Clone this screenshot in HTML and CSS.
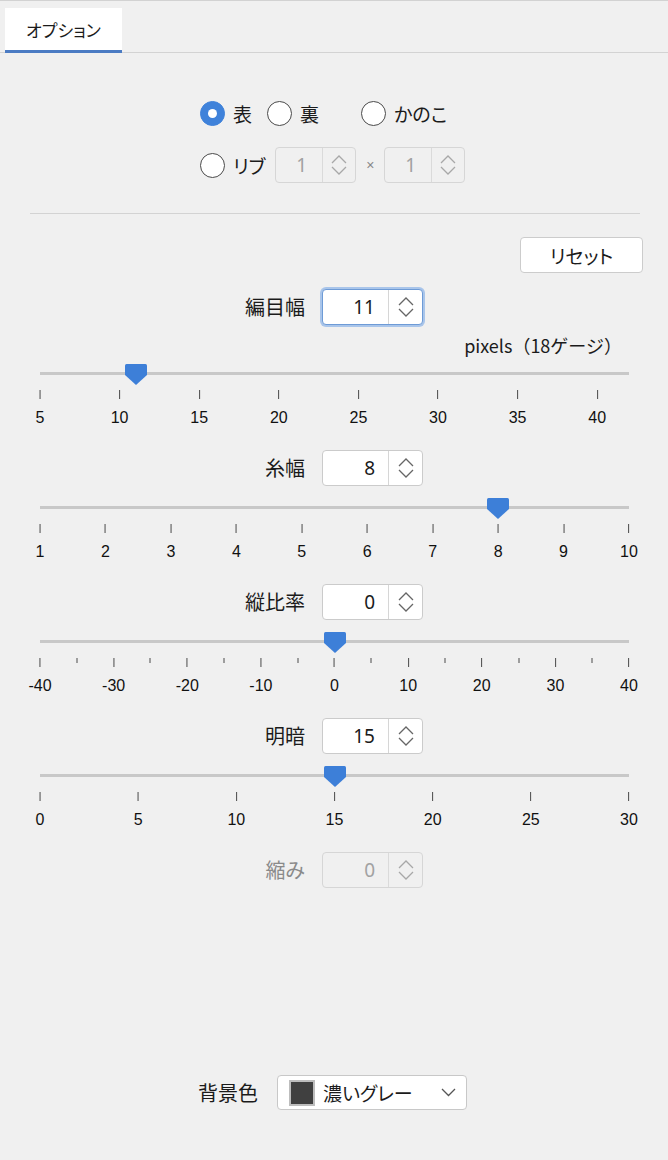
FILE: index.html
```html
<!DOCTYPE html>
<html lang="ja">
<head>
<meta charset="utf-8">
<title>オプション</title>
<link rel="stylesheet" href="styles.css">
</head>
<body>
<div class="panel">
  <div class="topline"></div>
  <div class="tabs"><div class="tab">オプション</div></div>

  <div class="stitch">
    <div class="stitch-row r1">
      <label class="radio i1"><span class="dot checked"></span><span class="rtext">表</span></label>
      <label class="radio i2"><span class="dot"></span><span class="rtext">裏</span></label>
      <label class="radio"><span class="dot"></span><span class="rtext">かのこ</span></label>
    </div>
    <div class="stitch-row r2">
      <label class="radio"><span class="dot"></span><span class="rtext">リブ</span></label>
      <div class="spin small disabled rib1">
        <span class="val">1</span>
        <span class="arrows"><svg width="18" height="24" viewBox="0 0 18 24"><path d="M2 10 L9 3 L16 10 M2 14 L9 21 L16 14" fill="none" stroke="currentColor" stroke-width="1.3"/></svg></span>
      </div>
      <span class="times">×</span>
      <div class="spin small disabled">
        <span class="val">1</span>
        <span class="arrows"><svg width="18" height="24" viewBox="0 0 18 24"><path d="M2 10 L9 3 L16 10 M2 14 L9 21 L16 14" fill="none" stroke="currentColor" stroke-width="1.3"/></svg></span>
      </div>
    </div>
  </div>

  <div class="sep"></div>

  <div class="reset-row"><button class="btn">リセット</button></div>

  <div class="field first">
    <span class="label">編目幅</span>
    <div class="spin focused">
      <span class="val">11</span>
      <span class="arrows"><svg width="18" height="24" viewBox="0 0 18 24"><path d="M2 10 L9 3 L16 10 M2 14 L9 21 L16 14" fill="none" stroke="currentColor" stroke-width="1.3"/></svg></span>
    </div>
  </div>
  <div class="unit">pixels（18ゲージ）</div>
  <div class="slider s-first">
    <div class="track"></div>
    <svg class="thumb" style="left:16.216%" width="22" height="21" viewBox="0 0 22 21"><path d="M1.5 0 H20.5 Q22 0 22 1.5 V11 L11 21 L0 11 V1.5 Q0 0 1.5 0 Z" fill="#3d7fd8"/></svg>
    <div class="tick" style="left:0%"><i></i><b>5</b></div>
    <div class="tick" style="left:13.514%"><i></i><b>10</b></div>
    <div class="tick" style="left:27.027%"><i></i><b>15</b></div>
    <div class="tick" style="left:40.541%"><i></i><b>20</b></div>
    <div class="tick" style="left:54.054%"><i></i><b>25</b></div>
    <div class="tick" style="left:67.568%"><i></i><b>30</b></div>
    <div class="tick" style="left:81.081%"><i></i><b>35</b></div>
    <div class="tick" style="left:94.595%"><i></i><b>40</b></div>
  </div>

  <div class="field">
    <span class="label">糸幅</span>
    <div class="spin">
      <span class="val">8</span>
      <span class="arrows"><svg width="18" height="24" viewBox="0 0 18 24"><path d="M2 10 L9 3 L16 10 M2 14 L9 21 L16 14" fill="none" stroke="currentColor" stroke-width="1.3"/></svg></span>
    </div>
  </div>
  <div class="slider">
    <div class="track"></div>
    <svg class="thumb" style="left:77.778%" width="22" height="21" viewBox="0 0 22 21"><path d="M1.5 0 H20.5 Q22 0 22 1.5 V11 L11 21 L0 11 V1.5 Q0 0 1.5 0 Z" fill="#3d7fd8"/></svg>
    <div class="tick" style="left:0%"><i></i><b>1</b></div>
    <div class="tick" style="left:11.111%"><i></i><b>2</b></div>
    <div class="tick" style="left:22.222%"><i></i><b>3</b></div>
    <div class="tick" style="left:33.333%"><i></i><b>4</b></div>
    <div class="tick" style="left:44.444%"><i></i><b>5</b></div>
    <div class="tick" style="left:55.556%"><i></i><b>6</b></div>
    <div class="tick" style="left:66.667%"><i></i><b>7</b></div>
    <div class="tick" style="left:77.778%"><i></i><b>8</b></div>
    <div class="tick" style="left:88.889%"><i></i><b>9</b></div>
    <div class="tick" style="left:100%"><i></i><b>10</b></div>
  </div>

  <div class="field">
    <span class="label">縦比率</span>
    <div class="spin">
      <span class="val">0</span>
      <span class="arrows"><svg width="18" height="24" viewBox="0 0 18 24"><path d="M2 10 L9 3 L16 10 M2 14 L9 21 L16 14" fill="none" stroke="currentColor" stroke-width="1.3"/></svg></span>
    </div>
  </div>
  <div class="slider">
    <div class="track"></div>
    <svg class="thumb" style="left:50%" width="22" height="21" viewBox="0 0 22 21"><path d="M1.5 0 H20.5 Q22 0 22 1.5 V11 L11 21 L0 11 V1.5 Q0 0 1.5 0 Z" fill="#3d7fd8"/></svg>
    <div class="tick" style="left:0%"><i></i><b>-40</b></div>
    <div class="tick minor" style="left:6.25%"><i></i></div>
    <div class="tick" style="left:12.5%"><i></i><b>-30</b></div>
    <div class="tick minor" style="left:18.75%"><i></i></div>
    <div class="tick" style="left:25%"><i></i><b>-20</b></div>
    <div class="tick minor" style="left:31.25%"><i></i></div>
    <div class="tick" style="left:37.5%"><i></i><b>-10</b></div>
    <div class="tick minor" style="left:43.75%"><i></i></div>
    <div class="tick" style="left:50%"><i></i><b>0</b></div>
    <div class="tick minor" style="left:56.25%"><i></i></div>
    <div class="tick" style="left:62.5%"><i></i><b>10</b></div>
    <div class="tick minor" style="left:68.75%"><i></i></div>
    <div class="tick" style="left:75%"><i></i><b>20</b></div>
    <div class="tick minor" style="left:81.25%"><i></i></div>
    <div class="tick" style="left:87.5%"><i></i><b>30</b></div>
    <div class="tick minor" style="left:93.75%"><i></i></div>
    <div class="tick" style="left:100%"><i></i><b>40</b></div>
  </div>

  <div class="field">
    <span class="label">明暗</span>
    <div class="spin">
      <span class="val">15</span>
      <span class="arrows"><svg width="18" height="24" viewBox="0 0 18 24"><path d="M2 10 L9 3 L16 10 M2 14 L9 21 L16 14" fill="none" stroke="currentColor" stroke-width="1.3"/></svg></span>
    </div>
  </div>
  <div class="slider">
    <div class="track"></div>
    <svg class="thumb" style="left:50%" width="22" height="21" viewBox="0 0 22 21"><path d="M1.5 0 H20.5 Q22 0 22 1.5 V11 L11 21 L0 11 V1.5 Q0 0 1.5 0 Z" fill="#3d7fd8"/></svg>
    <div class="tick" style="left:0%"><i></i><b>0</b></div>
    <div class="tick" style="left:16.667%"><i></i><b>5</b></div>
    <div class="tick" style="left:33.333%"><i></i><b>10</b></div>
    <div class="tick" style="left:50%"><i></i><b>15</b></div>
    <div class="tick" style="left:66.667%"><i></i><b>20</b></div>
    <div class="tick" style="left:83.333%"><i></i><b>25</b></div>
    <div class="tick" style="left:100%"><i></i><b>30</b></div>
  </div>

  <div class="field disabled-field">
    <span class="label">縮み</span>
    <div class="spin disabled">
      <span class="val">0</span>
      <span class="arrows"><svg width="18" height="24" viewBox="0 0 18 24"><path d="M2 10 L9 3 L16 10 M2 14 L9 21 L16 14" fill="none" stroke="currentColor" stroke-width="1.3"/></svg></span>
    </div>
  </div>

  <div class="bg-row">
    <span class="bg-label">背景色</span>
    <div class="select">
      <span class="swatch"></span>
      <span class="sel-text">濃いグレー</span>
      <svg class="caret" width="15" height="9" viewBox="0 0 15 9"><path d="M1 1 L7.5 7.5 L14 1" fill="none" stroke="#555" stroke-width="1.3"/></svg>
    </div>
  </div>
</div>
</body>
</html>
```

FILE: styles.css
```css
html, body {
  margin: 0;
  padding: 0;
}

body {
  background: #f0f0f0;
  color: #1b1b1b;
  font-family: "Noto Sans CJK JP", "Noto Sans", sans-serif;
  font-feature-settings: "palt";
  font-size: 19px;
}

.panel {
  width: 668px;
  min-height: 1160px;
}

.topline {
  height: 1px;
  background: #d2d2d2;
}

.tabs {
  padding: 7px 0 0 5px;
  border-bottom: 1px solid #d3d3d3;
  display: flex;
}

.tab {
  width: 117px;
  height: 42px;
  background: #ffffff;
  border-bottom: 3px solid #4b7bc3;
  margin-bottom: -1px;
  display: flex;
  align-items: center;
  justify-content: center;
  font-size: 17px;
  color: #1b1b1b;
}

/* stitch type radios */
.stitch {
  width: 268px;
  margin: 48px auto 0;
  display: flex;
  flex-direction: column;
}

.stitch-row {
  display: flex;
  align-items: center;
  white-space: nowrap;
}

.r1 {
  height: 25px;
}

.r2 {
  height: 36px;
  margin-top: 21px;
}

.radio {
  display: flex;
  align-items: center;
  flex-shrink: 0;
}

.i1 {
  flex: 0 0 67px;
}

.i2 {
  flex: 0 0 94px;
}

.dot {
  width: 25px;
  height: 25px;
  flex-shrink: 0;
  border-radius: 50%;
  border: 1.3px solid #4a4a4a;
  background: #ffffff;
  box-sizing: border-box;
  display: flex;
  align-items: center;
  justify-content: center;
}

.dot.checked {
  background: #3f82da;
  border-color: #3f82da;
}

.dot.checked::after {
  content: "";
  width: 9px;
  height: 9px;
  border-radius: 50%;
  background: #ffffff;
}

.rtext {
  margin-left: 8px;
  font-size: 19px;
  line-height: 25px;
  white-space: nowrap;
}

/* spin boxes */
.spin {
  width: 101px;
  height: 36px;
  flex-shrink: 0;
  box-sizing: border-box;
  border: 1px solid #cbcbcb;
  border-radius: 4px;
  background: #ffffff;
  display: flex;
  color: #1b1b1b;
}

.spin .val {
  flex: 0 0 66px;
  box-sizing: border-box;
  text-align: right;
  padding-right: 13px;
  border-right: 1px solid #d6d6d6;
  font-family: "Noto Sans", sans-serif;
  font-size: 19px;
  line-height: 34px;
}

.spin .arrows {
  flex: 1;
  display: flex;
  align-items: center;
  justify-content: center;
  color: #666666;
}

.spin.small {
  width: 81px;
}

.spin.small .val {
  flex: 0 0 47px;
  padding-right: 15px;
}

.rib1 {
  margin-left: 10px;
}

.times {
  flex: 0 0 28px;
  text-align: center;
  font-family: "Liberation Sans", sans-serif;
  font-size: 14px;
  color: #888888;
}

.spin.disabled {
  background: #f0f0f0;
  border-color: #d6d6d6;
  color: #a2a2a2;
}

.spin.disabled .val {
  border-right-color: #dadada;
}

.spin.disabled .arrows {
  color: #a8a8a8;
}

.spin.focused {
  border-color: #6e9bd6;
  box-shadow: 0 0 0 2px #a9c5ea;
}

.sep {
  height: 1px;
  background: #d3d3d3;
  margin: 30px 28px 0 30px;
}

.reset-row {
  display: flex;
  justify-content: flex-end;
  padding-right: 25px;
  margin-top: 23px;
}

.btn {
  width: 123px;
  height: 36px;
  background: #ffffff;
  border: 1px solid #cccccc;
  border-radius: 4px;
  font-family: "Noto Sans CJK JP", "Noto Sans", sans-serif;
  font-feature-settings: "palt";
  font-size: 19px;
  color: #1b1b1b;
  padding: 0;
}

/* fields */
.field {
  display: flex;
  align-items: center;
  height: 36px;
}

.field.first {
  margin-top: 16px;
}

.field .label {
  width: 305px;
  margin-right: 17px;
  text-align: right;
  font-size: 20px;
  line-height: 36px;
}

.disabled-field .label {
  color: #8a8a8a;
}

.unit {
  margin-top: 10px;
  padding-right: 46px;
  text-align: right;
  font-size: 18px;
  line-height: 20px;
  font-feature-settings: normal;
}

/* sliders */
.slider {
  position: relative;
  height: 87px;
  margin: 11px 39px 0 40px;
}

.slider.s-first {
  margin-top: 8px;
}

.track {
  position: absolute;
  left: 0;
  right: 0;
  top: 9px;
  height: 3px;
  background: #c8c8c8;
}

.thumb {
  position: absolute;
  top: 1px;
  margin-left: -11px;
}

.tick {
  position: absolute;
  top: 27px;
  transform: translateX(-50%);
  display: flex;
  flex-direction: column;
  align-items: center;
}

.tick i {
  display: block;
  width: 1px;
  height: 9px;
  background: #4a4a4a;
}

.tick.minor i {
  height: 5px;
}

.tick b {
  display: block;
  margin-top: 10px;
  font-family: "Liberation Sans", sans-serif;
  font-weight: normal;
  font-size: 16px;
  line-height: 18px;
  color: #111111;
}

/* background colour */
.bg-row {
  display: flex;
  align-items: center;
  justify-content: center;
  gap: 19px;
  margin-top: 187px;
  padding-right: 3px;
}

.bg-label {
  font-size: 20px;
}

.select {
  width: 190px;
  height: 35px;
  box-sizing: border-box;
  background: #ffffff;
  border: 1px solid #c8c8c8;
  border-radius: 4px;
  display: flex;
  align-items: center;
  padding: 0 10px 0 11px;
}

.swatch {
  width: 26px;
  height: 26px;
  box-sizing: border-box;
  border: 2px solid #bdbdbd;
  background: #404040;
}

.sel-text {
  margin-left: 8px;
  font-size: 19px;
}

.caret {
  margin-left: auto;
}
```
